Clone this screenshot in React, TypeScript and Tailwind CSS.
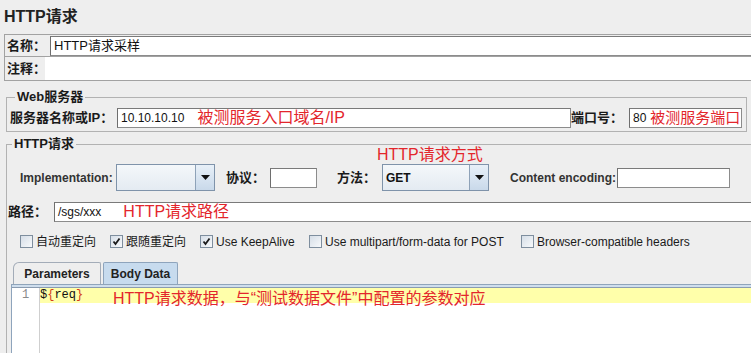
import React from 'react';

const red = 'text-[#e3262c] text-[16px] font-normal leading-[18px]';

function TextBox({
  className,
  children,
}: {
  className?: string;
  children?: React.ReactNode;
}) {
  return (
    <div
      className={`flex h-[20px] items-center overflow-hidden whitespace-nowrap border border-[#8c8c8c] border-l-[#6e6e6e] border-t-[#7a7a7a] bg-white pl-[3px] text-[12px] text-[#111] ${className ?? ''}`}
    >
      {children}
    </div>
  );
}

function Combo({ width, value }: { width: string; value?: string }) {
  return (
    <div
      className={`flex h-[27px] border border-[#7f93aa] bg-gradient-to-b from-[#f4f7fa] to-[#e4ebf2] ${width}`}
    >
      <div className="flex flex-1 items-center pl-[3px] text-[12px] font-bold text-[#111]">
        {value}
      </div>
      <div className="flex w-[19px] items-center justify-center border-l border-[#8ea2b8] bg-gradient-to-b from-[#e8f0f8] to-[#c9d9ea]">
        <svg width="9" height="5" viewBox="0 0 9 5">
          <path d="M0 0 L9 0 L4.5 5 Z" fill="#111" />
        </svg>
      </div>
    </div>
  );
}

function CheckBox({ checked }: { checked?: boolean }) {
  return (
    <div className="flex h-[13px] w-[13px] shrink-0 items-center justify-center border border-[#7e8e9e] bg-gradient-to-br from-[#d6dee7] to-[#f7f9fb]">
      {checked && (
        <svg width="9" height="9" viewBox="0 0 9 9">
          <path d="M1.5 4.5 L3.5 7 L7.5 1.5" fill="none" stroke="#1a1a1a" strokeWidth="1.8" />
        </svg>
      )}
    </div>
  );
}

function CheckItem({
  width,
  checked,
  label,
}: {
  width: string;
  checked?: boolean;
  label: string;
}) {
  return (
    <div className={`flex items-center gap-[3px] ${width}`}>
      <CheckBox checked={checked} />
      <span className="whitespace-nowrap text-[12px] text-[#1a1a1a]">{label}</span>
    </div>
  );
}

export default function App() {
  return (
    <div className="h-[353px] w-[751px] overflow-hidden bg-[#eeeeee] font-['Liberation_Sans','Noto_Sans_CJK_SC',sans-serif] text-[#1a1a1a]">
      <div className="h-[34px] pl-[4px] pt-[6px] text-[16px] font-bold leading-[22px] text-[#222]">
        HTTP请求
      </div>

      {/* name / comment box */}
      <div className="ml-[4px] w-[800px] border-y border-l border-[#a2a2a2]">
        <div className="flex h-[22px] items-start border-b border-[#a2a2a2]">
          <div className="w-[45px] whitespace-nowrap pl-[2px] text-[13px] font-bold leading-[21px]">名称：</div>
          <TextBox className="mt-[1px] flex-1 text-[13px]">HTTP请求采样</TextBox>
        </div>
        <div className="flex h-[23px]">
          <div className="w-[40px] whitespace-nowrap pl-[2px] text-[13px] font-bold leading-[23px]">注释：</div>
          <div className="flex-1 bg-white" />
        </div>
      </div>

      {/* web server */}
      <fieldset className="ml-[6px] mt-[8px] w-[741px] border border-[#b2b2b2] px-[3px] pb-[3px]">
        <legend className="ml-[5px] px-[2px] text-[13px] font-bold leading-[16px]">Web服务器</legend>
        <div className="mt-[3px] flex h-[20px] items-center">
          <div className="w-[107px] whitespace-nowrap text-[13px] font-bold">服务器名称或IP：</div>
          <TextBox className="w-[454px]">
            <span>10.10.10.10</span>
            <span className={`ml-[13px] ${red}`}>被测服务入口域名/IP</span>
          </TextBox>
          <div className="w-[58px] whitespace-nowrap text-[13px] font-bold">端口号：</div>
          <TextBox className="w-[113px]">
            <span>80</span>
            <span className="ml-[4px] text-[15px] leading-[18px] text-[#e3262c]">被测服务端口</span>
          </TextBox>
        </div>
      </fieldset>

      {/* http request */}
      <fieldset className="ml-[6px] mt-[4px] w-[800px] border-l border-t border-[#b2b2b2]">
        <legend className="ml-[5px] px-[2px] text-[13px] font-bold leading-[16px]">HTTP请求</legend>
        <div className="relative h-[12px]">
          <span className={`absolute left-[370px] top-[-6px] whitespace-nowrap ${red}`}>HTTP请求方式</span>
        </div>
        <div className="flex h-[27px] items-center pl-[13px]">
          <div className="w-[96px] text-[12px] font-bold text-[#333]">Implementation:</div>
          <Combo width="w-[99px]" />
          <div className="ml-[11px] w-[44px] whitespace-nowrap text-[13px] font-bold">协议：</div>
          <TextBox className="w-[47px]" />
          <div className="ml-[20px] w-[45px] whitespace-nowrap text-[13px] font-bold">方法：</div>
          <Combo width="w-[107px]" value="GET" />
          <div className="ml-[21px] w-[107px] whitespace-nowrap text-[12px] font-bold text-[#333]">
            Content encoding:
          </div>
          <TextBox className="w-[113px]" />
        </div>

        <div className="mt-[11px] flex h-[20px] items-center pl-[1px]">
          <div className="w-[46px] whitespace-nowrap text-[13px] font-bold">路径：</div>
          <TextBox className="flex-1">
            <span>/sgs/xxx</span>
            <span className={`ml-[22px] ${red}`}>HTTP请求路径</span>
          </TextBox>
        </div>

        <div className="mt-[11px] flex h-[17px] items-center pl-[13px]">
          <CheckItem width="w-[90px]" label="自动重定向" />
          <CheckItem width="w-[90px]" checked label="跟随重定向" />
          <CheckItem width="w-[109px]" checked label="Use KeepAlive" />
          <CheckItem width="w-[212px]" label="Use multipart/form-data for POST" />
          <CheckItem width="w-[200px]" label="Browser-compatible headers" />
        </div>

        {/* tabs */}
        <div className="mt-[12px] flex h-[22px] items-end gap-[2px] pl-[6px]">
          <div className="flex h-[22px] w-[88px] items-center justify-center rounded-tl-[6px] rounded-tr-[2px] border border-b-0 border-[#a3acb8] bg-[#eeeeee] text-[12px] font-bold text-[#222]">
            Parameters
          </div>
          <div className="flex h-[22px] w-[75px] items-center justify-center rounded-t-[2px] border border-b-0 border-[#8ea4bc] bg-[#c7dbee] text-[12px] font-bold text-[#222]">
            Body Data
          </div>
        </div>
        <div className="ml-[4px] border-l border-[#8ea4bc]">
          <div className="h-[1px] bg-[#8fa4ba]" />
          <div className="h-[2px] bg-[#cfdeed]" />
          <div className="h-[1px] bg-[#8a9bb0]" />
          <div className="relative flex h-[70px] bg-white">
            <div className="w-[28px] border-r border-[#cfcfcf] pl-[10px] font-['Liberation_Mono',monospace] text-[12px] leading-[15px] text-[#8a8a8a]">
              1
            </div>
            <div className="flex-1">
              <div className="h-[15px] bg-[#ffffaa] font-['Liberation_Mono',monospace] text-[12px] leading-[15px] text-[#111]">
                <span>$</span>
                <span className="text-[#d43d1a]">{'{'}</span>
                <span>req</span>
                <span className="text-[#d43d1a]">{'}'}</span>
              </div>
            </div>
            <span className={`absolute left-[101px] top-[2px] whitespace-nowrap ${red}`}>
              HTTP请求数据，与“测试数据文件”中配置的参数对应
            </span>
          </div>
        </div>
      </fieldset>
    </div>
  );
}
